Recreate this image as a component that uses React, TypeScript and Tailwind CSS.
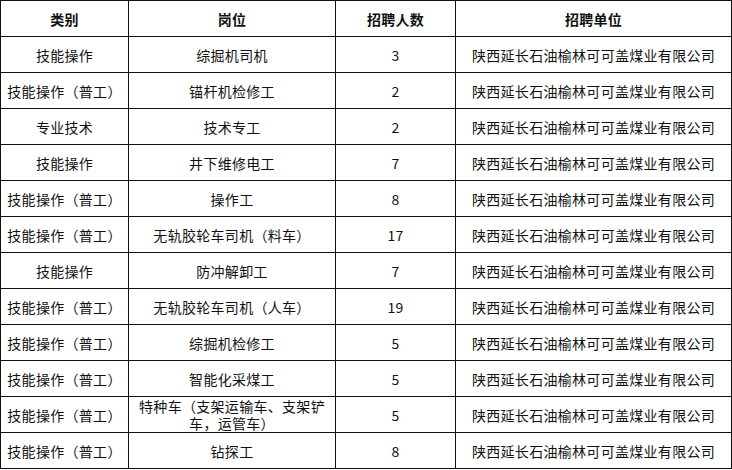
import React from "react";

const rows: [string, React.ReactNode, string][] = [
  ["技能操作", "综掘机司机", "3"],
  ["技能操作（普工）", "锚杆机检修工", "2"],
  ["专业技术", "技术专工", "2"],
  ["技能操作", "井下维修电工", "7"],
  ["技能操作（普工）", "操作工", "8"],
  ["技能操作（普工）", "无轨胶轮车司机（料车）", "17"],
  ["技能操作", "防冲解卸工", "7"],
  ["技能操作（普工）", "无轨胶轮车司机（人车）", "19"],
  ["技能操作（普工）", "综掘机检修工", "5"],
  ["技能操作（普工）", "智能化采煤工", "5"],
  [
    "技能操作（普工）",
    (
      <span className="block leading-[17px]">
        特种车（支架运输车、支架铲
        <br />
        车，运管车）
      </span>
    ),
    "5",
  ],
  ["技能操作（普工）", "钻探工", "8"],
];

const company = "陕西延长石油榆林可可盖煤业有限公司";

function Cell({ children, bold }: { children: React.ReactNode; bold?: boolean }) {
  return (
    <div
      className={
        "h-[36px] flex items-center justify-center text-center border-r border-b border-[#111] leading-[20px] " +
        (bold ? "font-bold" : "")
      }
    >
      {children}
    </div>
  );
}

export default function App() {
  return (
    <div className="w-[732px] h-[470px] bg-white">
      <div
        className="w-[732px] grid grid-cols-[128px_207px_120px_276px] border-l border-t border-[#111] text-[14px] tracking-[0.3px] text-[#111]"
        style={{ fontFamily: '"Noto Sans CJK SC", "Noto Sans", sans-serif' }}
      >
        <Cell bold>类别</Cell>
        <Cell bold>岗位</Cell>
        <Cell bold>招聘人数</Cell>
        <Cell bold>招聘单位</Cell>
        {rows.map((r, i) => (
          <React.Fragment key={i}>
            <Cell>{r[0]}</Cell>
            <Cell>{r[1]}</Cell>
            <Cell>{r[2]}</Cell>
            <Cell>{company}</Cell>
          </React.Fragment>
        ))}
      </div>
    </div>
  );
}
